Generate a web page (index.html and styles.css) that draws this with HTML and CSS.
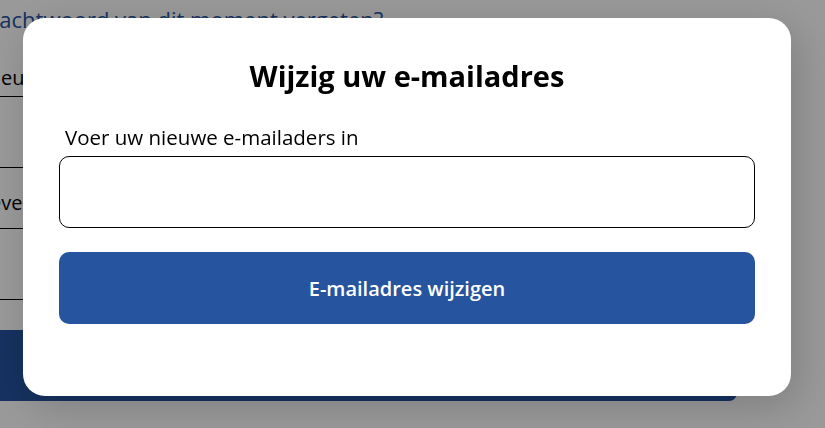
FILE: index.html
```html
<!DOCTYPE html>
<html lang="nl">
<head>
    <meta charset="UTF-8">
    <meta name="viewport" content="width=device-width, initial-scale=1.0">
    <title>Wijzig uw e-mailadres</title>
    <link rel="stylesheet" href="styles.css">
</head>
<body>

<div class="page">
    <a class="forgot-link" href="#">Wachtwoord van dit moment vergeten?</a>
    <div class="field field-first">
        <label class="field-label">Nieuw wachtwoord</label>
    </div>
    <div class="field"></div>
    <div class="field field-short">
        <label class="field-label field-label-alt">Bevestig wachtwoord</label>
    </div>
    <div class="field"></div>
    <button class="page-button">Opslaan</button>
</div>

<div class="overlay"></div>

<div class="modal">
    <h2 class="modal-title">Wijzig uw e-mailadres</h2>
    <label class="modal-label" for="email">Voer uw nieuwe e-mailaders in</label>
    <input type="email" class="modal-input" id="email">
    <button class="modal-button">E-mailadres wijzigen</button>
</div>

</body>
</html>
```

FILE: styles.css
```css
body {
    font-family: "Open Sans", "Noto Sans", Arial, sans-serif;
    margin: 0;
    background-color: #fff;
    overflow: hidden;
}
.page {
    margin-left: -19px;
    width: 756px;
}
.forgot-link {
    display: block;
    margin-left: -2px;
    font-size: 22px;
    line-height: 38px;
    color: #2553a0;
    text-decoration: none;
}
.field {
    height: 70px;
    border-bottom: 1px solid #000;
    display: flex;
    align-items: flex-end;
}
.field-first {
    height: 58px;
}
.field-short {
    height: 60px;
}
.field-label {
    font-size: 20px;
    line-height: 26px;
    padding-bottom: 5px;
    color: #000;
}
.field-label-alt {
    margin-left: -4px;
    padding-bottom: 12px;
}
.page-button {
    display: block;
    width: 100%;
    height: 71px;
    margin-top: 30px;
    border: none;
    border-radius: 8px;
    background: #2553a0;
}
.overlay {
    position: fixed;
    inset: 0;
    background: rgba(0, 0, 0, 0.4);
}
.modal {
    position: fixed;
    left: 23px;
    top: 18px;
    width: 696px;
    padding: 39px 36px 72px;
    background: #fff;
    border-radius: 22px;
    box-shadow: 6px 10px 40px rgba(0, 0, 0, 0.18);
    display: flex;
    flex-direction: column;
}
.modal-title {
    margin: 0 0 28px;
    font-size: 29px;
    line-height: 38px;
    font-weight: 700;
    text-align: center;
    color: #000;
}
.modal-label {
    padding-left: 6px;
    margin-bottom: 5px;
    font-size: 20.5px;
    line-height: 28px;
    color: #000;
}
.modal-input {
    height: 72px;
    box-sizing: border-box;
    border: 1px solid #000;
    border-radius: 10px;
    font-size: 18px;
    padding: 0 12px;
    margin-bottom: 24px;
}
.modal-button {
    height: 72px;
    border: none;
    border-radius: 10px;
    background: #26549e;
    color: #fff;
    font-family: inherit;
    font-size: 20px;
    font-weight: 600;
    cursor: pointer;
}
```
